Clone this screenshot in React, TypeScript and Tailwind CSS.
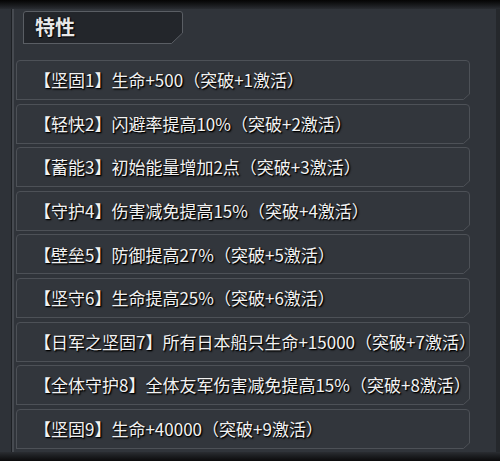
import React from "react";

const rows = [
  "【坚固1】生命+500（突破+1激活）",
  "【轻快2】闪避率提高10%（突破+2激活）",
  "【蓄能3】初始能量增加2点（突破+3激活）",
  "【守护4】伤害减免提高15%（突破+4激活）",
  "【壁垒5】防御提高27%（突破+5激活）",
  "【坚守6】生命提高25%（突破+6激活）",
  "【日军之坚固7】所有日本船只生命+15000（突破+7激活）",
  "【全体守护8】全体友军伤害减免提高15%（突破+8激活）",
  "【坚固9】生命+40000（突破+9激活）",
];

function RowFrame() {
  return (
    <svg className="absolute inset-0 h-full w-full" viewBox="0 0 454 40" preserveAspectRatio="none">
      <path d="M0.5 -1.5 H451.5" stroke="#1b1e22" strokeWidth="2" fill="none" />
      <path
        d="M0.5 40 V4 Q0.5 0.5 4 0.5 H450 Q453.5 0.5 453.5 4 V34 L447.5 39.5 H0.5"
        fill="#32363c"
        stroke="#4d5157"
        strokeWidth="1"
      />
      <path d="M453.5 34 L457 37 V41" stroke="#4d5157" strokeWidth="1" fill="none" />
    </svg>
  );
}

export default function App() {
  return (
    <div
      className="relative h-[461px] w-[500px] overflow-hidden bg-[#30343a]"
      style={{ fontFamily: '"Noto Sans CJK SC", "Noto Sans", sans-serif' }}
    >
      <div className="h-[9px] w-full bg-gradient-to-b from-[#050505] to-[#2a2d32]" />
      <div className="flex h-[452px]">
        <div className="w-[11px] bg-[#2e3238]" />
        <div className="w-[1px] bg-[#1d2024]" />
        <div className="w-[2px] bg-[#464a50]" />
        <div className="flex flex-1 flex-col">
          <div className="ml-[9px] mt-[2px] relative h-[33px] w-[160px]">
            <svg className="absolute inset-0 h-full w-full" viewBox="0 0 160 33">
              <path
                d="M0.5 33 V3 Q0.5 0.5 3 0.5 H157 Q159.5 0.5 159.5 3 V22 L148.5 32.5 H0.5 Z"
                fill="#23262b"
                stroke="#5a5e64"
                strokeWidth="1"
              />
            </svg>
            <div
              className="relative pl-[12px] pt-[3px] text-[20px] font-bold leading-[26px] text-[#e8e8e8]"
              style={{ textShadow: "1px 1px 1px #000, 0 0 2px #000" }}
            >
              特性
            </div>
          </div>
          <div className="ml-[2px] mt-[16px] flex w-[454px] flex-col gap-[3.6px]">
            {rows.map((t) => (
              <div key={t} className="relative h-10 shrink-0">
                <RowFrame />
                <div
                  className="relative flex h-full items-center pl-[18px] text-[17px] text-[#f2f2f2]"
                  style={{ textShadow: "1px 1px 1px #000, 1px 1px 2px #000" }}
                >
                  {t}
                </div>
              </div>
            ))}
          </div>
        </div>
        <div className="w-[4px] bg-[#25282c]" />
      </div>
      <div className="absolute bottom-0 left-0 h-[9px] w-full bg-gradient-to-b from-[#2a2d32] to-[#0b0b0c]" />
    </div>
  );
}
